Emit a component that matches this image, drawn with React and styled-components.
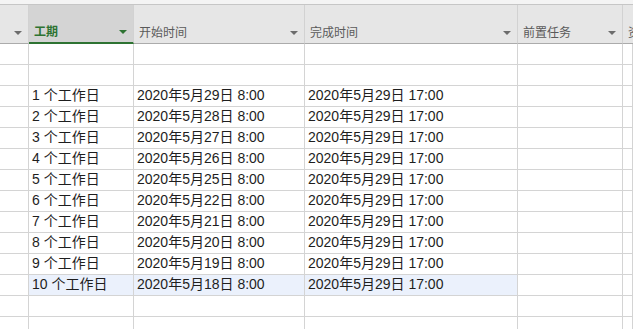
import styled, { createGlobalStyle } from "styled-components";

const GlobalStyle = createGlobalStyle`
  * { box-sizing: border-box; }
  html, body { margin: 0; padding: 0; background: #ffffff; }
  body {
    font-family: "Liberation Sans", "Noto Sans CJK SC", sans-serif;
    overflow: hidden;
  }
`;

const COLS = "29px 105px 171px 213px 105px 1fr";

const columns = [
  { title: "", active: false },
  { title: "工期", active: true },
  { title: "开始时间", active: false },
  { title: "完成时间", active: false },
  { title: "前置任务", active: false },
  { title: "资源名称", active: false },
];

const startDays = [29, 28, 27, 26, 25, 22, 21, 20, 19, 18];

const Sheet = styled.div`
  width: 633px;
  height: 329px;
  overflow: hidden;
  background: #fff;
`;

const TopStrip = styled.div`
  height: 5px;
  background: #f4f4f4;
  border-bottom: 1px solid #c6c6c6;
`;

const HeaderRow = styled.div`
  display: grid;
  grid-template-columns: ${COLS};
  height: 39px;
`;

const HeaderCell = styled.div`
  display: flex;
  align-items: flex-end;
  justify-content: space-between;
  padding: 0 6px 3px 5px;
  background: ${(p) => (p.$active ? "#d4d4d4" : "#e6e6e6")};
  border-right: 1px solid #d2d2d2;
  border-bottom: ${(p) => (p.$active ? "2px solid #2e7332" : "1px solid #ababab")};
  font-size: 12px;
  line-height: 14px;
  font-weight: ${(p) => (p.$active ? 700 : 400)};
  color: ${(p) => (p.$active ? "#2e7332" : "#5a5a5a")};
  white-space: nowrap;
  overflow: hidden;
`;

const Arrow = styled.span`
  flex: none;
  width: 0;
  height: 0;
  margin-bottom: 5px;
  border-left: 4px solid transparent;
  border-right: 4px solid transparent;
  border-top: 4px solid ${(p) => (p.$active ? "#2e7332" : "#6c6c6c")};
`;

const Row = styled.div`
  display: grid;
  grid-template-columns: ${COLS};
  height: 21px;
`;

const Cell = styled.div`
  height: 21px;
  padding: 0 3px;
  border-right: 1px solid #d4d4d4;
  border-bottom: 1px solid #d4d4d4;
  background: ${(p) => (p.$hl ? "#ebf1fc" : "#fff")};
  font-size: 14px;
  line-height: 19px;
  color: #1e1e1e;
  white-space: nowrap;
  overflow: hidden;
`;

const rows = [
  null,
  null,
  ...startDays.map((d, i) => ({
    dur: `${i + 1} 个工作日`,
    start: `2020年5月${d}日 8:00`,
    end: "2020年5月29日 17:00",
    hl: i === 9,
  })),
  null,
  null,
];

export default function App() {
  return (
    <>
      <GlobalStyle />
      <Sheet>
        <TopStrip />
        <HeaderRow>
          {columns.map((c, i) => (
            <HeaderCell key={i} $active={c.active}>
              <span>{c.title}</span>
              {i < 5 && <Arrow $active={c.active} />}
            </HeaderCell>
          ))}
        </HeaderRow>
        {rows.map((r, i) => (
          <Row key={i}>
            <Cell />
            <Cell $hl={r?.hl}>{r?.dur}</Cell>
            <Cell $hl={r?.hl}>{r?.start}</Cell>
            <Cell $hl={r?.hl}>{r?.end}</Cell>
            <Cell />
            <Cell />
          </Row>
        ))}
      </Sheet>
    </>
  );
}
